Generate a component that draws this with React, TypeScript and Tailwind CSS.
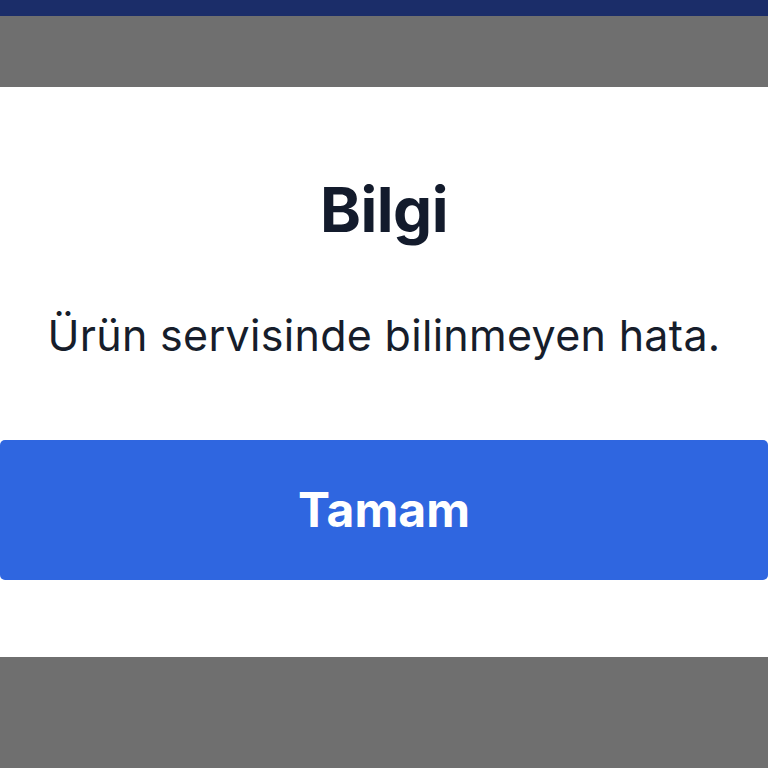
import React from 'react';

const App: React.FC = () => {
  return (
    <div
      className="w-[768px] h-[768px] flex flex-col bg-[#6f6f6f] overflow-hidden"
      style={{ fontFamily: 'Inter, "Noto Sans", sans-serif' }}
    >
      <div className="h-[16px] bg-[#1b2d69] shrink-0"></div>
      <div className="h-[71px] shrink-0"></div>

      <div className="h-[570px] bg-white flex flex-col shrink-0">
        <div className="pt-[83px] h-[168px] flex justify-center">
          <h1 className="text-[62px] leading-[80px] font-bold text-[#131b2c] tracking-[-0.5px]">Bilgi</h1>
        </div>
        <div className="h-[185px] flex justify-center pt-[52px]">
          <p className="text-[43px] leading-[56px] text-[#161d2b] tracking-[0.3px]">Ürün servisinde bilinmeyen hata.</p>
        </div>
        <button className="h-[140px] w-full bg-[#2f66e0] rounded-[5px] flex items-center justify-center">
          <span className="text-[48px] font-bold text-white">Tamam</span>
        </button>
      </div>
    </div>
  );
};

export default App;
